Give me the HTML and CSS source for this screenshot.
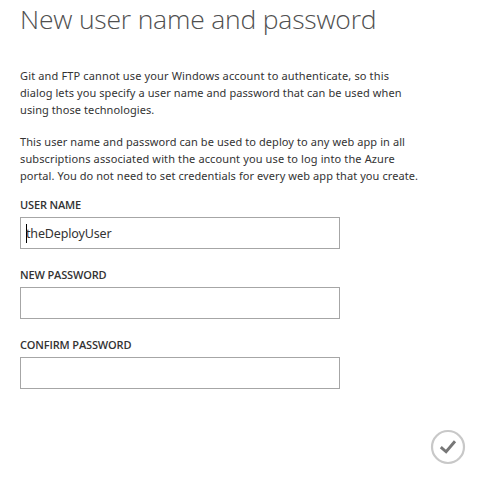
FILE: index.html
```html
<!DOCTYPE html>
<html lang="en">
<head>
<meta charset="utf-8">
<title>New user name and password</title>
<link rel="stylesheet" href="styles.css">
</head>
<body>
<form class="dialog">
  <h1 class="title">New user name and password</h1>
  <p class="intro"><span class="spaced">Git and FTP cannot use your Windows account to authenticate, so this</span><br>dialog lets you specify a user name and password that can be used when<br>using those technologies.</p>
  <p class="intro">This user name and password can be used to deploy to any web app in all<br><span class="semi-spaced">subscriptions associated with the account you use to log into the Azure</span><br>portal. You do not need to set credentials for every web app that you create.</p>
  <div class="field">
    <div class="label">USER NAME</div>
    <div class="box"><span class="caret"></span><span class="value">theDeployUser</span></div>
  </div>
  <div class="field">
    <div class="label">NEW PASSWORD</div>
    <div class="box"></div>
  </div>
  <div class="field">
    <div class="label">CONFIRM PASSWORD</div>
    <div class="box"></div>
  </div>
  <div class="actions">
    <svg class="confirm" width="36" height="36" viewBox="0 0 36 36" fill="none">
      <circle cx="18" cy="18" r="16" stroke="#c8c8c8" stroke-width="2.2"/>
      <path d="M10.8 18.1 16.1 22.8 25 12.2" stroke="#777" stroke-width="2.9"/>
    </svg>
  </div>
</form>
</body>
</html>
```
FILE: styles.css
```css
* { box-sizing: border-box; }
body {
  margin: 0;
  background: #fff;
  color: #333;
  font-family: "Noto Sans", "Open Sans", sans-serif;
}
.dialog {
  width: 478px;
  height: 477px;
  padding: 0 12px 0 20px;
  overflow: hidden;
}
.title {
  margin: 0 0 29px;
  height: 38px;
  line-height: 38px;
  font-family: "Open Sans", "Noto Sans", sans-serif;
  font-size: 26.5px;
  font-weight: 300;
  letter-spacing: -0.2px;
  color: #505050;
  white-space: nowrap;
}
.intro {
  margin: 0 0 15px;
  font-size: 11px;
  line-height: 17px;
  letter-spacing: 0.08px;
  white-space: nowrap;
}
.spaced { letter-spacing: 0.14px; }
.semi-spaced { letter-spacing: 0.12px; }
.intro + .field { margin-top: -2px; }
.field { margin-bottom: 18px; }
.label {
  height: 20px;
  line-height: 16px;
  font-family: "Open Sans", "Noto Sans", sans-serif;
  font-size: 11px;
  font-weight: 600;
  letter-spacing: -0.15px;
}
.box {
  display: flex;
  align-items: center;
  width: 320px;
  height: 32px;
  padding-left: 5px;
  border: 1px solid #a6a6a6;
}
.caret {
  width: 1px;
  height: 19px;
  margin-right: -1px;
  background: #000;
}
.value {
  font-size: 12.5px;
  letter-spacing: -0.15px;
}
.actions {
  display: flex;
  justify-content: flex-end;
  margin-top: 40px;
}
```
